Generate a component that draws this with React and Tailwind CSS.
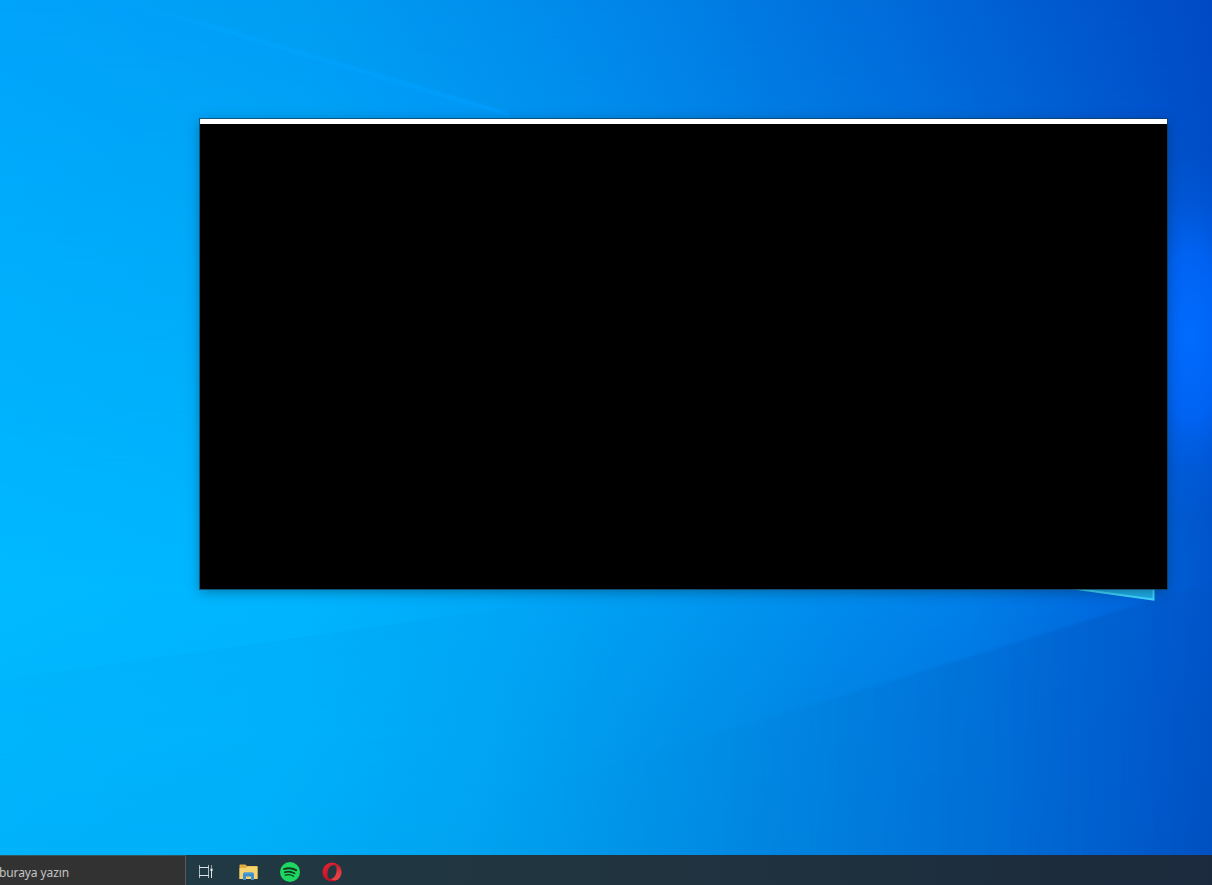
function Wallpaper() {
  return (
    <svg
      className="absolute inset-0 h-full w-full"
      viewBox="0 0 1212 855"
      preserveAspectRatio="none"
      aria-hidden="true"
    >
      <defs>
        <linearGradient id="mid">
          <stop offset="0" stopColor="#00baff" />
          <stop offset="0.25" stopColor="#00b6ff" />
          <stop offset="0.4" stopColor="#00aafa" />
          <stop offset="0.6" stopColor="#0096f0" />
          <stop offset="0.8" stopColor="#0080ea" />
          <stop offset="0.93" stopColor="#0067de" />
          <stop offset="1" stopColor="#0056cc" />
        </linearGradient>
        <linearGradient id="top">
          <stop offset="0" stopColor="#00a3fa" />
          <stop offset="0.25" stopColor="#009df3" />
          <stop offset="0.5" stopColor="#0087e9" />
          <stop offset="0.75" stopColor="#0069d8" />
          <stop offset="1" stopColor="#0049c5" />
        </linearGradient>
        <linearGradient id="low">
          <stop offset="0" stopColor="#00b2fa" />
          <stop offset="0.2" stopColor="#00aff8" />
          <stop offset="0.4" stopColor="#00a2ef" />
          <stop offset="0.6" stopColor="#0088e2" />
          <stop offset="0.8" stopColor="#006dd5" />
          <stop offset="0.92" stopColor="#005aca" />
          <stop offset="1" stopColor="#004fbf" />
        </linearGradient>
        <linearGradient id="fadeDown" x1="0" y1="0" x2="0" y2="1">
          <stop offset="0" stopColor="#fff" />
          <stop offset="1" stopColor="#000" />
        </linearGradient>
        <linearGradient id="fadeUp" x1="0" y1="0" x2="0" y2="1">
          <stop offset="0" stopColor="#000" />
          <stop offset="0.6" stopColor="#aaa" />
          <stop offset="1" stopColor="#fff" />
        </linearGradient>
        <linearGradient id="fadeRight">
          <stop offset="0" stopColor="#000" />
          <stop offset="0.5" stopColor="#bbb" />
          <stop offset="0.85" stopColor="#ddd" />
          <stop offset="0.92" stopColor="#999" />
          <stop offset="1" stopColor="#666" />
        </linearGradient>
        <linearGradient id="beam" gradientUnits="userSpaceOnUse" x1="100" y1="0" x2="520" y2="0">
          <stop offset="0" stopColor="#009fff" stopOpacity="0" />
          <stop offset="0.3" stopColor="#00a6ff" stopOpacity="0.8" />
          <stop offset="1" stopColor="#009cff" stopOpacity="0.9" />
        </linearGradient>
        <linearGradient id="beamGlow" gradientUnits="userSpaceOnUse" x1="350" y1="65" x2="332" y2="125">
          <stop offset="0" stopColor="#009dff" stopOpacity="0.35" />
          <stop offset="1" stopColor="#009dff" stopOpacity="0" />
        </linearGradient>
        <linearGradient id="ray" gradientUnits="userSpaceOnUse" x1="0" y1="0" x2="620" y2="0">
          <stop offset="0" stopColor="#00acf6" stopOpacity="0.35" />
          <stop offset="0.6" stopColor="#00a4f4" stopOpacity="0.5" />
          <stop offset="1" stopColor="#00a0f4" stopOpacity="0" />
        </linearGradient>
        <radialGradient id="glow">
          <stop offset="0" stopColor="#006cff" />
          <stop offset="0.45" stopColor="#0066fb" stopOpacity="0.8" />
          <stop offset="0.75" stopColor="#0060ea" stopOpacity="0.3" />
          <stop offset="1" stopColor="#005ee6" stopOpacity="0" />
        </radialGradient>
        <mask id="topMask">
          <rect width="1212" height="590" fill="url(#fadeDown)" />
        </mask>
        <mask id="lowMask">
          <rect y="590" width="1212" height="265" fill="url(#fadeUp)" />
        </mask>
        <mask id="wedgeMask">
          <rect x="480" y="560" width="732" height="295" fill="url(#fadeRight)" />
        </mask>
        <mask id="rayMask" maskUnits="userSpaceOnUse" x="0" y="580" width="1212" height="275">
          <rect y="590" width="1212" height="140" fill="url(#fadeDown)" />
        </mask>
        <filter id="soft">
          <feGaussianBlur stdDeviation="0.8" />
        </filter>
      </defs>

      <rect width="1212" height="855" fill="url(#mid)" />
      <rect width="1212" height="590" fill="url(#top)" mask="url(#topMask)" />
      <rect y="590" width="1212" height="265" fill="url(#low)" mask="url(#lowMask)" />

      {/* shaded floor under the lower light ray */}
      <g mask="url(#wedgeMask)">
        <path
          d="M0 950L820 703L1154 600L1250 570V950Z"
          fill="url(#low)"
          filter="url(#soft)"
        />
      </g>
      <g mask="url(#rayMask)">
        <path d="M0 680L640 589V855H0Z" fill="url(#ray)" />
      </g>

      {/* upper light ray */}
      <path d="M100 0L510 114L490 180L180 100Z" fill="url(#beamGlow)" />
      <path d="M100 -6L508 114" stroke="url(#beam)" strokeWidth="3.500" filter="url(#soft)" />

      <ellipse cx="1190" cy="335" rx="80" ry="185" fill="url(#glow)" />

      {/* corner of the window logo */}
      <path d="M1065 587H1154V600Z" fill="#20aee8" />
      <path d="M1070 588L1153.5 599.5V585" fill="none" stroke="#42d8ff" strokeWidth="2" />
    </svg>
  );
}

function TaskViewIcon() {
  return (
    <svg width="15" height="14" viewBox="0 0 15 14" fill="none" stroke="#dce6e9">
      <path d="M1 2.500H11M1 10.500H11" />
      <path d="M1.500 0V13M10.500 0V13" opacity="0.75" />
      <path d="M13.500 0V3" opacity="0.6" />
      <path d="M13.500 6V13" />
      <path d="M12.500 3.500H14.500V6H12.500Z" fill="#fff" stroke="none" />
    </svg>
  );
}

function FolderIcon() {
  return (
    <svg width="19" height="16" viewBox="0 0 19 16">
      <path d="M0.500 1Q0.500 0.500 1 0.500H6.500L8 2H18Q18.500 2 18.500 2.500V15H0.500Z" fill="#e0ad3e" />
      <path d="M0.500 4H7L8.500 2.500H18.500V15H0.500Z" fill="#f6d36d" />
      <path d="M4 16V10Q4 8.500 5.500 8.500H13.500Q15 8.500 15 10V16H12V12.500H7V16Z" fill="#3d8fd0" />
      <path d="M5 8.500H14V10H5Z" fill="#559fd4" />
    </svg>
  );
}

function SpotifyIcon() {
  return (
    <svg width="20" height="20" viewBox="0 0 20 20" fill="none" strokeLinecap="round">
      <circle cx="10" cy="10" r="10" fill="#1ed760" />
      <path d="M4 7.100C8 5.900 12.700 6.300 16.100 8.200" stroke="#123822" strokeWidth="1.900" />
      <path d="M4.700 10.200C8 9.300 11.800 9.700 14.700 11.400" stroke="#123822" strokeWidth="1.600" />
      <path d="M5.200 13.100C8 12.400 11.100 12.700 13.600 14.200" stroke="#123822" strokeWidth="1.300" />
    </svg>
  );
}

function OperaIcon() {
  return (
    <svg width="20" height="20" viewBox="0 0 20 20">
      <defs>
        <linearGradient id="opera" x1="0" y1="0" x2="0.6" y2="1">
          <stop offset="0" stopColor="#e92534" />
          <stop offset="1" stopColor="#b80d1f" />
        </linearGradient>
        <linearGradient id="operaSide" x1="0" y1="0" x2="0" y2="1">
          <stop offset="0" stopColor="#b51c27" />
          <stop offset="0.5" stopColor="#dc3c40" />
          <stop offset="1" stopColor="#ea4548" />
        </linearGradient>
      </defs>
      <path
        d="M10 0.500A9.500 9.500 0 1 0 10 19.500A9.500 9.500 0 1 0 10 0.500ZM11.500 3C14.500 3 15.200 6 14.500 10S11.500 17 8.800 17S5 14 5.600 10S8.600 3 11.500 3Z"
        fill="url(#opera)"
        fillRule="evenodd"
      />
      <path
        d="M11.500 3C13.500 1.500 15.500 2 16.500 3C20.500 6.800 20.500 13.200 16.500 17C15 18.500 12 19.200 8.800 17C11.500 17 13.800 14 14.500 10S14.500 3 11.500 3Z"
        fill="url(#operaSide)"
      />
    </svg>
  );
}

const apps = [
  { name: "Spotify", Icon: SpotifyIcon },
  { name: "Opera", Icon: OperaIcon },
];

function Taskbar() {
  return (
    <footer className="flex h-[30px] shrink-0 bg-linear-to-r from-[#213c46] via-[#20343f] to-[#1c2a3d]">
      <div className="flex w-[186px] items-center border-t border-r border-t-[#35545c] border-r-[#59595b] bg-[#333233]">
        <span className="-ml-px mt-[5px] whitespace-nowrap font-['Noto_Sans',sans-serif] text-[12px] leading-4 tracking-[-0.1px] text-[#c4c4c4]">
          buraya yazın
        </span>
      </div>
      <nav className="flex items-center pt-1 pl-3">
        <button className="mr-[26px]" aria-label="Task view">
          <TaskViewIcon />
        </button>
        <button className="mr-[22px]" aria-label="Files">
          <FolderIcon />
        </button>
        <div className="flex gap-[22px]">
          {apps.map(({ name, Icon }) => (
            <button key={name} aria-label={name}>
              <Icon />
            </button>
          ))}
        </div>
      </nav>
    </footer>
  );
}

export default function App() {
  return (
    <div className="flex h-screen flex-col overflow-hidden bg-[#00a8fa]">
      <main className="relative min-h-0 flex-1 overflow-hidden">
        <Wallpaper />
        <section className="absolute top-[119px] left-[200px] h-[470px] w-[967px] border-t-[5px] border-white bg-black shadow-[0_0_0_1px_rgba(20,55,75,0.65),0_3px_12px_rgba(0,35,55,0.42)]" />
      </main>
      <Taskbar />
    </div>
  );
}
